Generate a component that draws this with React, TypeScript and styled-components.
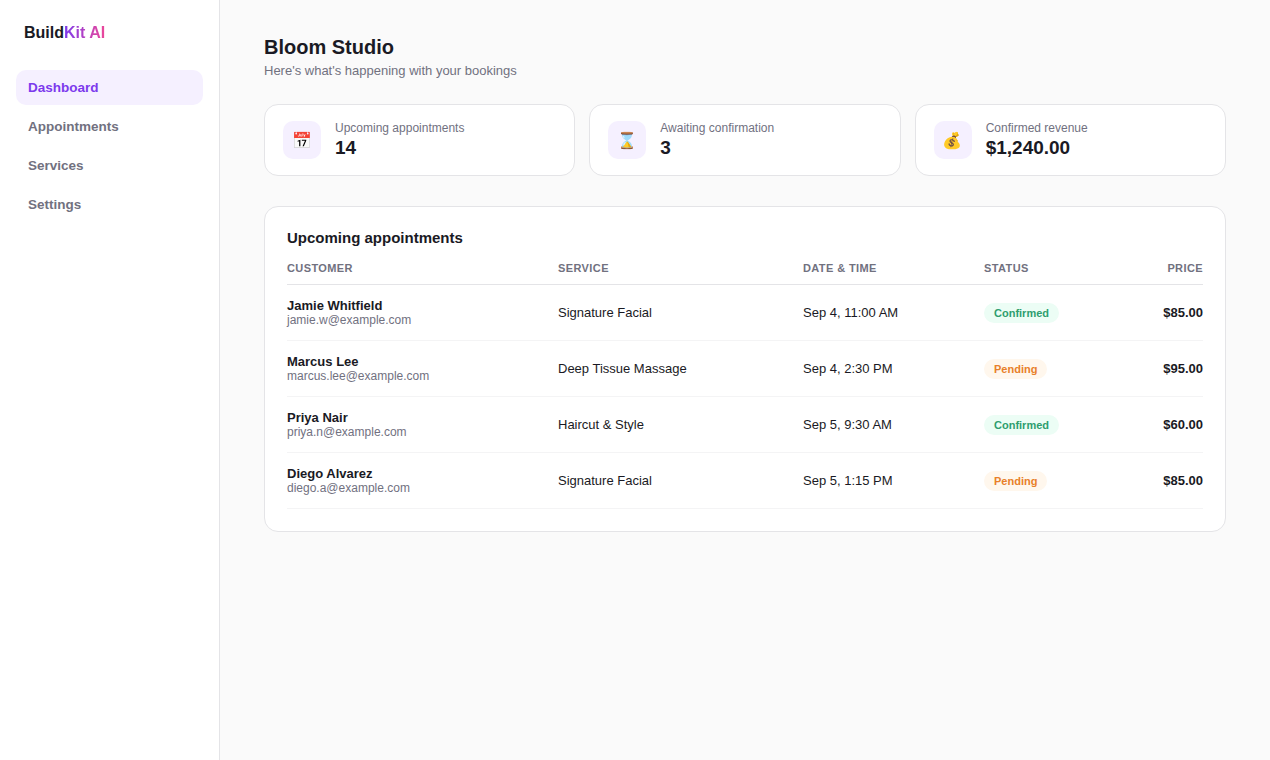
import React from "react";
import styled, { createGlobalStyle } from "styled-components";

const Global = createGlobalStyle`
  html, body { margin: 0; padding: 0; }
  body { font-family: "Liberation Sans", Arial, sans-serif; background: #fafafa; color: #1a1a24; }
  * { box-sizing: border-box; }
`;
const Shell = styled.div`display: flex; min-height: 760px;`;
const Sidebar = styled.aside`
  width: 220px; flex: none; background: #fff; border-right: 1px solid #e4e4e7; padding: 24px 16px;
`;
const Logo = styled.div`font-size: 16px; line-height: 18px; font-weight: 700; padding: 0 8px; margin-bottom: 28px;`;
const Accent = styled.span`
  background: linear-gradient(90deg, #7c3aed, #ec4899);
  -webkit-background-clip: text; background-clip: text; color: transparent;
`;
const Nav = styled.nav`display: flex; flex-direction: column; gap: 4px;`;
const NavItem = styled.a<{ $active?: boolean }>`
  display: block; height: 35px; line-height: 35px; padding: 0 12px; border-radius: 10px;
  font-size: 13.5px; font-weight: 600;
  color: ${p => (p.$active ? "#7c3aed" : "#71717f")};
  background: ${p => (p.$active ? "#f5f0ff" : "transparent")};
`;
const Main = styled.main`flex: 1; min-width: 0; padding: 36px 44px;`;
const Title = styled.h1`margin: 0; font-size: 20px; line-height: 23px; font-weight: 700;`;
const Subtitle = styled.p`margin: 4px 0 0; font-size: 13px; line-height: 15px; color: #71717f;`;
const Stats = styled.section`display: grid; grid-template-columns: repeat(3, 1fr); gap: 14px; margin-top: 26px;`;
const StatCard = styled.div`
  height: 72px; display: flex; align-items: center; gap: 14px; padding: 0 18px;
  background: #fff; border: 1px solid #e4e4e7; border-radius: 14px;
`;
const IconTile = styled.div`
  width: 38px; height: 38px; flex: none; border-radius: 10px; background: #f5f0ff;
  display: flex; align-items: center; justify-content: center; font-size: 16px;
  font-family: "Noto Color Emoji", sans-serif;
`;
const StatText = styled.div`display: flex; flex-direction: column;`;
const StatLabel = styled.div`font-size: 12px; line-height: 14px; color: #71717f;`;
const StatValue = styled.div`font-size: 19px; line-height: 22px; font-weight: 700; margin-top: 2px;`;
const TableCard = styled.section`
  margin-top: 30px; background: #fff; border: 1px solid #e4e4e7; border-radius: 14px; padding: 22px;
`;
const CardTitle = styled.h2`margin: 0 0 15px; font-size: 15px; line-height: 18px; font-weight: 700;`;
const Table = styled.table`width: 100%; border-collapse: collapse; table-layout: fixed;`;
const Th = styled.th<{ $w?: number; $right?: boolean }>`
  width: ${p => (p.$w ? `${p.$w}px` : "auto")};
  padding: 0 0 9px; font-size: 11px; line-height: 13px; font-weight: 700; letter-spacing: 0.4px;
  text-transform: uppercase; color: #71717f; border-bottom: 1px solid #e4e4e7;
  text-align: ${p => (p.$right ? "right" : "left")};
`;
const Row = styled.tr`border-bottom: 1px solid #f4f4f5;`;
const Td = styled.td<{ $right?: boolean; $bold?: boolean }>`
  height: 56px; padding: 0; font-size: 13px; line-height: 15px; vertical-align: middle; color: #1a1a24;
  text-align: ${p => (p.$right ? "right" : "left")};
  font-weight: ${p => (p.$bold ? 700 : 400)};
`;
const Name = styled.div`font-size: 13px; line-height: 14px; font-weight: 700;`;
const Email = styled.div`font-size: 12px; line-height: 14px; color: #71717f;`;
const Badge = styled.span<{ $kind: "confirmed" | "pending" }>`
  display: inline-block; padding: 3px 10px; border-radius: 999px; font-size: 11px; line-height: 14px; font-weight: 700;
  color: ${p => (p.$kind === "confirmed" ? "#2f9e6f" : "#e8802a")};
  background: ${p => (p.$kind === "confirmed" ? "#ecfdf5" : "#fff7ed")};
`;

const rows = [
  ["Jamie Whitfield", "jamie.w@example.com", "Signature Facial", "Sep 4, 11:00 AM", "confirmed", "$85.00"],
  ["Marcus Lee", "marcus.lee@example.com", "Deep Tissue Massage", "Sep 4, 2:30 PM", "pending", "$95.00"],
  ["Priya Nair", "priya.n@example.com", "Haircut & Style", "Sep 5, 9:30 AM", "confirmed", "$60.00"],
  ["Diego Alvarez", "diego.a@example.com", "Signature Facial", "Sep 5, 1:15 PM", "pending", "$85.00"],
] as const;
const stats = [
  ["📅", "Upcoming appointments", "14"],
  ["⌛", "Awaiting confirmation", "3"],
  ["💰", "Confirmed revenue", "$1,240.00"],
];

export default function App() {
  return (
    <Shell>
      <Global />
      <Sidebar>
        <Logo>Build<Accent>Kit AI</Accent></Logo>
        <Nav>
          <NavItem $active>Dashboard</NavItem>
          <NavItem>Appointments</NavItem>
          <NavItem>Services</NavItem>
          <NavItem>Settings</NavItem>
        </Nav>
      </Sidebar>
      <Main>
        <Title>Bloom Studio</Title>
        <Subtitle>Here's what's happening with your bookings</Subtitle>
        <Stats>
          {stats.map(([icon, label, value]) => (
            <StatCard key={label}>
              <IconTile>{icon}</IconTile>
              <StatText>
                <StatLabel>{label}</StatLabel>
                <StatValue>{value}</StatValue>
              </StatText>
            </StatCard>
          ))}
        </Stats>
        <TableCard>
          <CardTitle>Upcoming appointments</CardTitle>
          <Table>
            <thead>
              <tr>
                <Th $w={271}>Customer</Th>
                <Th $w={245}>Service</Th>
                <Th $w={181}>Date &amp; Time</Th>
                <Th $w={130}>Status</Th>
                <Th $right>Price</Th>
              </tr>
            </thead>
            <tbody>
              {rows.map(r => (
                <Row key={r[0]}>
                  <Td><Name>{r[0]}</Name><Email>{r[1]}</Email></Td>
                  <Td>{r[2]}</Td>
                  <Td>{r[3]}</Td>
                  <Td><Badge $kind={r[4]}>{r[4] === "confirmed" ? "Confirmed" : "Pending"}</Badge></Td>
                  <Td $right $bold>{r[5]}</Td>
                </Row>
              ))}
            </tbody>
          </Table>
        </TableCard>
      </Main>
    </Shell>
  );
}
